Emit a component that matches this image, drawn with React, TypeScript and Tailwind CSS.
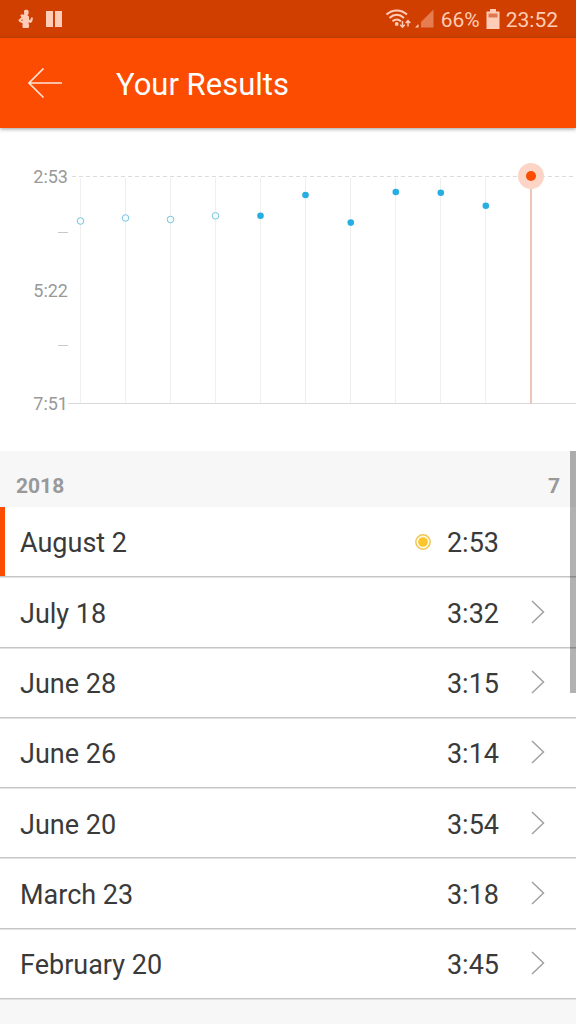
import React from 'react';

interface Result {
  date: string;
  time: string;
  best?: boolean;
}

const results: Result[] = [
  { date: 'August 2', time: '2:53', best: true },
  { date: 'July 18', time: '3:32' },
  { date: 'June 28', time: '3:15' },
  { date: 'June 26', time: '3:14' },
  { date: 'June 20', time: '3:54' },
  { date: 'March 23', time: '3:18' },
  { date: 'February 20', time: '3:45' },
];

const points = [
  { x: 80.5, y: 93, open: true },
  { x: 125.5, y: 90, open: true },
  { x: 170.5, y: 91.5, open: true },
  { x: 215.5, y: 87.8, open: true },
  { x: 260.5, y: 87.8 },
  { x: 305.5, y: 67 },
  { x: 350.8, y: 94.6 },
  { x: 395.8, y: 64 },
  { x: 440.8, y: 64.8 },
  { x: 485.8, y: 77.8 },
];

function StatusBar() {
  return (
    <div className="flex h-[38px] items-center justify-between bg-[#d03f00] px-[18px] text-[21px] leading-10 text-[#ffccb8]">
      <div className="flex items-center gap-3">
        <svg width="16" height="20" viewBox="0 0 16 20" fill="currentColor">
          <path d="M6 2C6.6 0.2 9.8 0.2 10.6 2L10.6 4.8L9.4 6.2L11 7.6L11 10.4L12.2 11.2L13 8.4L15 8.8L14.2 12.6L12.6 14L10.8 13.2L10.6 14.6L11.2 16.4L10.6 19H4.8L4.4 16.4L4.8 14.4L1 12.6L0.4 11L3.6 8.2L2.2 6.6L3.6 5.2L6.2 5.8Z" />
          <path d="M2.8 11.2L4.4 10.2L4.6 12Z" fill="#d03f00" />
        </svg>
        <svg width="16" height="16" viewBox="0 0 16 16" fill="currentColor">
          <path d="M0 0h7v16H0zM9 0h7v16H9z" />
        </svg>
      </div>
      <div className="flex items-center">
        <svg width="50" height="20" viewBox="0 0 50 20" fill="none" stroke="currentColor">
          <path d="M1.5 5.5 C7.5 0 16 0 22 5.5 M4.5 9 C9 4.8 14.5 4.8 19 9 M7.5 12.3 C10.3 9.8 13 9.8 16 12.3" strokeWidth="2" />
          <circle cx="11.7" cy="15" r="1.9" fill="currentColor" stroke="none" />
          <path d="M17.5 12v6M15.2 15.8l2.3 2.4 2.3-2.4M23 17.5v-6M20.7 14L23 11.6l2.3 2.4" strokeWidth="1.5" />
          <path d="M30 18.5L33.5 15V18.5Z" fill="currentColor" stroke="none" />
          <path d="M36 18.5V13L48.5 0.5V18.5Z" fill="#e57d50" stroke="none" />
        </svg>
        <span className="ml-1.5 pt-0.5">66%</span>
        <svg className="ml-1.5" width="14" height="20" viewBox="0 0 14 20">
          <path d="M4 0h6v2.5h3.5V20H0.5V2.5H4z" fill="currentColor" />
          <path d="M2.5 4.5h9v4h-9z" fill="#e0784f" />
        </svg>
        <span className="ml-1.5 pt-0.5">23:52</span>
      </div>
    </div>
  );
}

function Chart() {
  return (
    <svg className="block w-full" viewBox="0 0 576 323" role="img" aria-label="Results over time">
      <path d="M72 48.5H576" stroke="#dcdcdc" strokeDasharray="4 3" />
      <path d="M68 275.5H576" stroke="#dadada" />
      {points.map((p) => (
        <path key={p.x} d={`M${Math.floor(p.x) + 0.5} 50V275`} stroke="#efefef" />
      ))}
      <path d="M58 104.5h10M58 217.5h10" stroke="#c8c8c8" />
      <g fill="#999999" fontSize="18" textAnchor="end">
        <text x="68" y="55">2:53</text>
        <text x="68" y="169">5:22</text>
        <text x="68" y="282">7:51</text>
      </g>
      {points.map((p) =>
        p.open ? (
          <circle key={p.x} cx={p.x} cy={p.y} r="3.3" fill="#f4fdff" stroke="#7cc4e0" />
        ) : (
          <circle key={p.x} cx={p.x} cy={p.y} r="3.3" fill="#27aee0" />
        ),
      )}
      <path d="M531 48V276" stroke="#eec3b8" strokeWidth="2" />
      <circle cx="531" cy="48" r="13" fill="#fcd5c7" />
      <circle cx="531" cy="48" r="5" fill="#fc4c02" />
    </svg>
  );
}

function ResultRow({ result }: { result: Result }) {
  const content = (
    <>
      <span className="flex-1 pt-1">{result.date}</span>
      {result.best && (
        <svg className="mr-4" width="16" height="16" viewBox="0 0 16 16">
          <circle cx="8" cy="8" r="7.2" fill="#fffbe6" stroke="#f1c44e" strokeWidth="1.4" />
          <circle cx="8" cy="8" r="4.8" fill="#fcc52c" />
        </svg>
      )}
      <span className="pt-1">{result.time}</span>
      <span className="ml-8 w-3.5">
        {!result.best && (
          <svg width="14" height="24" viewBox="0 0 14 24" fill="none" stroke="#a0a0a0" strokeWidth="1.5">
            <path d="M1 1L12.5 12L1 23" />
          </svg>
        )}
      </span>
    </>
  );

  return (
    <li className="relative flex flex-1 border-b border-[#c6c6c6] shadow-[0_1px_0_#e2e2e2]">
      {result.best && <span className="absolute inset-y-0 left-0 w-[5px] bg-[#fc4c02]" />}
      {result.best ? (
        <div className="flex flex-1 items-center pl-5 pr-[31px]">{content}</div>
      ) : (
        <a href="#result" className="flex flex-1 items-center pl-5 pr-[31px]">{content}</a>
      )}
    </li>
  );
}

export default function App() {
  return (
    <div className="relative flex min-h-screen flex-col bg-white font-['Roboto',sans-serif] text-[#3a3a3a]">
      <StatusBar />
      <header className="flex h-[90px] items-center bg-[#fc4c02] pl-7 text-white shadow-[0_1px_4px_rgba(0,0,0,0.4)]">
        <button type="button" aria-label="Back" className="mr-[54px]">
          <svg width="34" height="30" viewBox="0 0 34 30" fill="none" stroke="#ffe3d6" strokeWidth="1.6">
            <path d="M15.5 0.5L1 15L15.5 29.5M1 15H34" />
          </svg>
        </button>
        <h1 className="pt-1 text-[31px] leading-10">Your Results</h1>
      </header>
      <Chart />
      <main className="relative flex flex-1 flex-col">
        <div className="flex h-14 items-center justify-between bg-[#f7f7f7] px-4 pt-4 text-[21px] font-bold text-[#999999]">
          <h2>2018</h2>
          <span>7</span>
        </div>
        <ul className="flex flex-1 flex-col text-[27px]">
          {results.map((r) => (
            <ResultRow key={r.date} result={r} />
          ))}
        </ul>
        <div className="h-[25px] bg-[#f7f7f7]" />
        <div className="absolute right-0 top-0 h-[242px] w-1.5 bg-black/30" />
      </main>
    </div>
  );
}
